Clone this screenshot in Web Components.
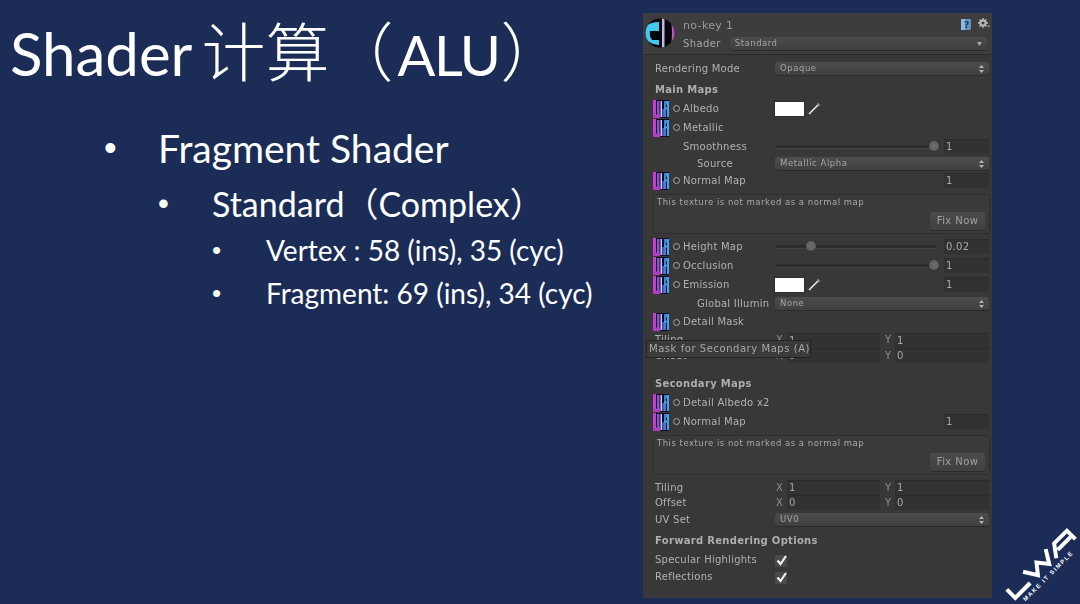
<!DOCTYPE html>
<html>
<head>
<meta charset="utf-8">
<style>
  html, body { margin: 0; padding: 0; background: #1b2d56; }
  body { width: 1080px; height: 604px; overflow: hidden; }
</style>
</head>
<body>
<slide-deck>
  <slide-text slot="text">
    <slide-title>Shader<span style="font-size:64px;font-weight:300;margin-left:9px">计算（</span><span style="font-size:56px;letter-spacing:-1.5px;margin-left:4px">ALU</span><span style="font-size:64px;font-weight:300;margin-left:1px">）</span></slide-title>
    <slide-bullet level="1">Fragment Shader</slide-bullet>
    <slide-bullet level="2">Standard（Complex）</slide-bullet>
    <slide-bullet level="3">Vertex : 58 (ins), 35 (cyc)</slide-bullet>
    <slide-bullet level="3">Fragment: 69 (ins), 34 (cyc)</slide-bullet>
  </slide-text>
  <unity-inspector slot="panel">
    <ins-header name="no-key 1" shader="Standard"></ins-header>
    <ins-row label="Rendering Mode" h="19" mt="4"><ins-popup>Opaque</ins-popup></ins-row>
    <ins-heading h="18" mt="3">Main Maps</ins-heading>
    <ins-row label="Albedo" tex h="19"><ins-color></ins-color></ins-row>
    <ins-row label="Metallic" tex h="19"></ins-row>
    <ins-row label="Smoothness" indent="40" h="19"><ins-slider value="100" num="1"></ins-slider></ins-row>
    <ins-row label="Source" indent="54" h="15"><ins-popup>Metallic Alpha</ins-popup></ins-row>
    <ins-row label="Normal Map" tex h="17" mt="1"><ins-field right>1</ins-field></ins-row>
    <ins-help h="40" mt="5"></ins-help>
    <ins-row label="Height Map" tex h="19" mt="3"><ins-slider value="22" num="0.02"></ins-slider></ins-row>
    <ins-row label="Occlusion" tex h="19"><ins-slider value="100" num="1"></ins-slider></ins-row>
    <ins-row label="Emission" tex h="19"><ins-color><ins-field right>1</ins-field></ins-color></ins-row>
    <ins-row label="Global Illumin" indent="54" h="19"><ins-popup>None</ins-popup></ins-row>
    <ins-row label="Detail Mask" tex h="16" mt="1"></ins-row>
    <ins-row label="Tiling" h="16" mt="2"><ins-vec x="1" y="1"></ins-vec></ins-row>
    <ins-row label="Offset" h="15"><ins-vec x="0" y="0"></ins-vec></ins-row>
    <ins-heading h="18" mt="12">Secondary Maps</ins-heading>
    <ins-row label="Detail Albedo x2" tex h="19"></ins-row>
    <ins-row label="Normal Map" tex h="19"><ins-field right>1</ins-field></ins-row>
    <ins-help h="40" mt="4"></ins-help>
    <ins-row label="Tiling" h="15" mt="5"><ins-vec x="1" y="1"></ins-vec></ins-row>
    <ins-row label="Offset" h="15"><ins-vec x="0" y="0"></ins-vec></ins-row>
    <ins-row label="UV Set" h="19"><ins-popup>UV0</ins-popup></ins-row>
    <ins-heading h="18" mt="3">Forward Rendering Options</ins-heading>
    <ins-row label="Specular Highlights" h="17" mt="1"><ins-check></ins-check></ins-row>
    <ins-row label="Reflections" h="17"><ins-check></ins-check></ins-row>
    <ins-tooltip>Mask for Secondary Maps (A)</ins-tooltip>
  </unity-inspector>
  <uwa-logo slot="logo"></uwa-logo>
</slide-deck>

<script>
const SANS = `Lato, "Noto Sans CJK SC", sans-serif`
const UI = `"DejaVu Sans", sans-serif`

// small helper so every element reads the same way
function define(name, css, html) {
  class El extends HTMLElement {
    connectedCallback() {
      if (this.shadowRoot) return
      const shadow = this.attachShadow({ mode: 'open' })
      const body = typeof html === 'function' ? html(this) : html
      shadow.innerHTML = `<style>${css}</style>${body}`
      if (this.hasAttribute('h')) this.style.height = this.getAttribute('h') + 'px'
      if (this.hasAttribute('mt')) this.style.marginTop = this.getAttribute('mt') + 'px'
    }
  }
  customElements.define(name, El)
}

const arrows = `<svg width="5" height="8" viewBox="0 0 5 8"><path d="M2.5 0L5 3H0zM2.5 8L0 5h5z" fill="#b4b4b4"/></svg>`

const texIcon = `<svg width="16" height="18" viewBox="0 0 16 18">
  <rect width="16" height="18" fill="#100c24"/>
  <rect x="0" y="0" width="3" height="18" fill="#c23fd0"/>
  <rect x="0" y="14.5" width="7" height="3.5" fill="#b03cc8"/>
  <rect x="4" y="1" width="2.5" height="14" fill="#8e4fd8"/>
  <rect x="7.5" y="1" width="1.5" height="16" fill="#d0c8f0"/>
  <rect x="9.5" y="9" width="1.2" height="8" fill="#7c7cf0"/>
  <rect x="11" y="1" width="5" height="3.5" fill="#3c8ce0"/>
  <rect x="11" y="1" width="2" height="16" fill="#3a80dc"/>
  <rect x="14" y="1" width="2" height="16" fill="#40a4ec"/>
  <rect x="11" y="7.5" width="5" height="2" fill="#40a4ec"/>
</svg>`

define('slide-deck', `
  :host { display: flex; width: 1080px; height: 604px; background: #1b2d56; position: relative; overflow: hidden; }
  .text { flex: 0 0 643px; }
`, `<div class="text"><slot name="text"></slot></div><slot name="panel"></slot><slot name="logo"></slot>`)

define('slide-text', `
  :host { display: flex; flex-direction: column; font-family: ${SANS}; color: #fff; }
`, `<slot></slot>`)

define('slide-title', `
  :host { display: block; font-size: 60px; line-height: 70px; height: 70px; margin: 17px 0 0 10px; white-space: nowrap; }
`, `<slot></slot>`)

define('slide-bullet', `
  :host { display: flex; white-space: nowrap; }
  :host([level="1"]) { font-size: 39px; line-height: 46px; margin: 38px 0 0 104px; }
  :host([level="2"]) { font-size: 34px; line-height: 40px; margin: 13px 0 0 158px; }
  :host([level="3"]) { font-size: 28px; line-height: 34px; margin: 9px 0 0 212px; }
  .dot { width: 54px; flex: none; font-family: "Liberation Sans", sans-serif; }
  :host([level="1"]) .dot { font-size: 36px; }
  :host([level="2"]) .dot { font-size: 31px; }
  :host([level="3"]) .dot { font-size: 26px; }
`, `<span class="dot">•</span><span><slot></slot></span>`)

define('unity-inspector', `
  :host { display: flex; flex-direction: column; position: relative; flex: none; width: 349px; height: 585px; margin-top: 13px;
    background: #383838; color: #b2b2b2; font: 10px/1 ${UI}; letter-spacing: .25px; filter: blur(.35px); }
`, `<slot></slot>`)

define('ins-header', `
  :host { display: block; height: 41px; background: #3d3d3d; border-bottom: 1px solid #2b2b2b; position: relative; }
  .wrap { display: flex; align-items: flex-start; height: 100%; padding: 5px 2px 0 2px; gap: 8px; box-sizing: border-box; }
  .lines { flex: 1; display: flex; flex-direction: column; gap: 4px; padding-top: 2px; }
  .name { font-size: 11px; color: #9a9a9a; display: flex; justify-content: space-between; height: 13px; letter-spacing: .35px; }
  .icons { display: flex; gap: 6px; margin-top: -2px; }
  .shader { display: flex; align-items: center; gap: 9px; color: #a8a8a8; letter-spacing: .4px; }
  .popup { flex: 1; height: 13px; margin-right: 3px; border-radius: 3px; background: linear-gradient(#4b4b4b, #3f3f3f); box-shadow: 0 1px 0 #2a2a2a;
    display: flex; align-items: center; justify-content: space-between; padding: 0 5px; font-size: 8.5px; letter-spacing: .5px; color: #a6a6a6; }
  svg { display: block; flex: none; }
`, el => `<div class="wrap">
  <svg width="30" height="30" viewBox="0 0 30 30">
    <defs><clipPath id="s"><circle cx="15" cy="15" r="14.5"/></clipPath></defs>
    <g clip-path="url(#s)">
      <rect width="30" height="30" fill="#05050c"/>
      <path d="M0 9Q5 4 14 4V13H5Q4 18 7 22H14V27Q4 26 0 20Z" fill="#43c8f0"/>
      <rect x="17" y="0" width="2.5" height="30" fill="#bcb8e8"/>
      <path d="M25.5 0H30V30H25.5Q28.5 15 25.5 0Z" fill="#c04fc8"/>
    </g>
  </svg>
  <div class="lines">
    <div class="name"><span>${el.getAttribute('name')}</span>
      <span class="icons">
        <svg width="12" height="13" viewBox="0 0 12 13"><rect x="1" y="1" width="10" height="11" rx="1" fill="#5f93c4"/><path d="M1 1h4v11H1z" fill="#8cb8dc"/><text x="4" y="10" font-size="9" font-family="DejaVu Sans" font-weight="bold" fill="#1f3550">?</text></svg>
        <svg width="12" height="12" viewBox="0 0 12 12"><circle cx="5" cy="5" r="2.6" fill="none" stroke="#bcbcbc" stroke-width="2"/><path d="M5 0v2M5 8v2M0 5h2M8 5h2M1.5 1.5l1.3 1.3M7.2 7.2l1.3 1.3M1.5 8.5l1.3-1.3M7.2 2.8l1.3-1.3" stroke="#bcbcbc" stroke-width="1.4"/><path d="M9.5 7.5h2.5L10.7 9.5z" fill="#bcbcbc"/></svg>
      </span>
    </div>
    <div class="shader"><span>Shader</span><div class="popup"><span>${el.getAttribute('shader')}</span><svg width="5" height="4" viewBox="0 0 5 4"><path d="M0 0h5L2.5 4z" fill="#aaa"/></svg></div></div>
  </div>
</div>`)

define('ins-row', `
  :host { display: grid; grid-template-columns: 132px 1fr; align-items: center; padding-right: 3px; flex: none; }
  .left { display: flex; align-items: center; white-space: nowrap; min-width: 0; overflow: hidden; }
  .tex { margin-left: 10px; display: block; flex: none; }
  .radio { width: 5px; height: 5px; border: 1px solid #a8a8a8; border-radius: 50%; margin: 0 3px 0 4px; flex: none; }
  .right { display: flex; align-items: center; justify-content: flex-end; min-width: 0; }
  ::slotted(*) { flex: 1; }
`, el => {
  const indent = el.getAttribute('indent')
  const label = el.getAttribute('label')
  const left = el.hasAttribute('tex')
    ? `${texIcon.replace('<svg', '<svg class="tex"')}<span class="radio"></span><span>${label}</span>`
    : `<span style="margin-left:${indent || 12}px">${label}</span>`
  return `<div class="left">${left}</div><div class="right"><slot></slot></div>`
})

define('ins-heading', `
  :host { display: flex; align-items: center; padding-left: 12px; font-weight: bold; color: #aeaeae; flex: none; letter-spacing: .3px; }
`, `<slot></slot>`)

define('ins-popup', `
  :host { display: flex; align-items: center; justify-content: space-between; height: 13px; padding: 0 5px; border-radius: 3px;
    background: linear-gradient(#4d4d4d, #404040); box-shadow: 0 1px 0 #2a2a2a; font-size: 8.5px; letter-spacing: .55px; color: #a6a6a6; }
`, `<span><slot></slot></span>${arrows}`)

define('ins-field', `
  :host { display: block; box-sizing: border-box; height: 15px; line-height: 14px; padding-left: 2px; background: #323232; border-top: 1px solid #2a2a2a; color: #a8a8a8; }
  :host([right]) { flex: 0 0 45px !important; width: 45px; margin-left: auto; }
`, `<slot></slot>`)

define('ins-color', `
  :host { display: flex; align-items: center; gap: 4px; }
  .sw { width: 29px; height: 14px; background: #fff; box-shadow: 0 0 0 1px #2e2e2e; flex: none; }
  svg { flex: none; }
  .rest { flex: 1; display: flex; justify-content: flex-end; }
`, `<div class="sw"></div><svg width="13" height="13" viewBox="0 0 13 13"><path d="M1 12L11 2" stroke="#e8e8e8" stroke-width="1.6"/><path d="M9.5 1L12 3.5" stroke="#777" stroke-width="1.6"/></svg><div class="rest"><slot></slot></div>`)

define('ins-slider', `
  :host { display: flex; align-items: center; gap: 7px; }
  .track { flex: 1; height: 3px; background: #2c2c2c; border-bottom: 1px solid #444; position: relative; border-radius: 2px; }
  .thumb { position: absolute; top: -3.5px; width: 10px; height: 10px; margin-left: -5px; border-radius: 50%; background: radial-gradient(#6e6e6e, #585858); box-shadow: 0 0 1px #222; }
`, el => `<div class="track"><div class="thumb" style="left:calc(${el.getAttribute('value')}% - ${el.getAttribute('value') == 100 ? 3 : 0}px)"></div></div><ins-field right>${el.getAttribute('num')}</ins-field>`)

define('ins-vec', `
  :host { display: grid; grid-template-columns: 12px 93px 1fr; align-items: center; }
  .y { display: flex; align-items: center; }
  span { color: #8e8e8e; padding-left: 1px; }
  .y span { width: 6px; flex: none; padding-left: 5px; padding-right: 4px; }
  .y ins-field { flex: 1; }
`, el => `<span>X</span><ins-field>${el.getAttribute('x')}</ins-field><div class="y"><span>Y</span><ins-field>${el.getAttribute('y')}</ins-field></div>`)

define('ins-help', `
  :host { display: block; box-sizing: border-box; margin: 0 2px 0 10px; flex: none; border: 1px solid #2e2e2e; border-radius: 3px; background: #3a3a3a; position: relative; padding: 3px 3px; font-size: 8.5px; letter-spacing: .5px; color: #a8a8a8; }
  .btn { position: absolute; right: 4px; bottom: 3px; width: 55px; height: 18px; line-height: 17px; text-align: center; font-size: 10px; letter-spacing: .4px; color: #a0a0a0; border-radius: 3px; background: linear-gradient(#4b4b4b, #404040); box-shadow: 0 1px 0 #2a2a2a; }
`, `This texture is not marked as a normal map<div class="btn">Fix Now</div>`)

define('ins-check', `
  :host { display: block; height: 12px; }
  svg { display: block; }
`, `<svg width="14" height="13" viewBox="0 0 14 13"><rect x="0" y="1" width="12" height="12" rx="1.5" fill="#4a4a4a"/><path d="M2.5 6.5L5.5 10L11 2" fill="none" stroke="#f0f0f0" stroke-width="2.2"/></svg>`)

define('ins-tooltip', `
  :host { position: absolute; left: 3px; top: 327px; height: 18px; width: 165px; box-sizing: border-box; background: #3b3b3b; border: 1px solid #232323; line-height: 16px; padding-left: 2px; white-space: nowrap; color: #a8a8a8; letter-spacing: .55px; }
`, `<slot></slot>`)

define('uwa-logo', `
  :host { position: absolute; right: 0; bottom: 0; width: 80px; height: 80px; display: block; overflow: hidden; }
  svg { display: block; }
  .tag { position: absolute; left: 0; top: 0; color: #fff; font: bold 6px/1 "Liberation Sans", sans-serif; letter-spacing: 1.4px; white-space: nowrap;
    transform-origin: 0 0; transform: translate(22px, 74px) rotate(-45deg); }
`, `<svg width="80" height="80" viewBox="0 0 80 80" fill="none" stroke="#fff" stroke-width="4">
    <g transform="translate(16 76) rotate(-45)">
      <path d="M1 -14V-2H22"/>
      <path d="M25 -15L33 -2L41 -12L49 -2L57 -15"/>
      <path d="M58 -1L67 -13H85V-1M65 -6H83"/>
    </g>
  </svg><span class="tag">MAKE IT SIMPLE</span>`)
</script>
</body>
</html>
